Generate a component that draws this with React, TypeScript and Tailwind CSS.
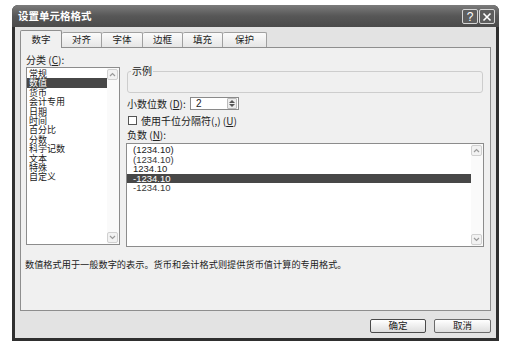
import React from 'react'

const categories = ['常规', '数值', '货币', '会计专用', '日期', '时间', '百分比', '分数', '科学记数', '文本', '特殊', '自定义']
const negatives = ['(1234.10)', '(1234.10)', '1234.10', '-1234.10', '-1234.10']
const tabs = [
    { label: '数字', w: 'w-[42px]' },
    { label: '对齐', w: 'w-[40px]' },
    { label: '字体', w: 'w-[41px]' },
    { label: '边框', w: 'w-[40px]' },
    { label: '填充', w: 'w-[40px]' },
    { label: '保护', w: 'w-[44px]' },
]

const Chevron = ({ up }: { up?: boolean }) => (
    <svg width="7" height="5" viewBox="0 0 7 5">
        <path d={up ? 'M1 4 L3.5 1.5 L6 4' : 'M1 1 L3.5 3.5 L6 1'} fill="none" stroke="#9a9a9a" strokeWidth="1.2" />
    </svg>
)

const ScrollBar = () => (
    <div className="w-[12px] flex flex-col justify-between py-[1px] pr-[1px] bg-[#fafafa]">
        <div className="h-[11px] border border-[#d0d0d0] rounded-[2px] bg-[#f2f2f2] flex items-center justify-center">
            <Chevron up />
        </div>
        <div className="h-[11px] border border-[#d0d0d0] rounded-[2px] bg-[#f2f2f2] flex items-center justify-center">
            <Chevron />
        </div>
    </div>
)

export default function App() {
    return (
        <div className="w-[520px] h-[351px] bg-white pt-[5px] pl-[12px] font-['Noto_Sans_CJK_SC',sans-serif] text-[#222]">
            <div className="w-[487px] h-[336px] flex flex-col rounded-t-[6px] overflow-hidden bg-[#2f2f2f]">
                {/* title bar */}
                <div className="h-[22px] flex items-center justify-between pl-[6px] pr-[4px] bg-gradient-to-b from-[#7c7c7c] via-[#575757] to-[#4b4b4b]">
                    <span className="text-[10.5px] font-bold text-white leading-none">设置单元格格式</span>
                    <div className="flex gap-[1px] mt-[1px]">
                        <div className="w-[16px] h-[15px] border border-[#d6d6d6] rounded-[2px] bg-[#5e5e5e] flex items-center justify-center text-white text-[12px] leading-none font-['Liberation_Sans',sans-serif]">?</div>
                        <div className="w-[16px] h-[15px] border border-[#d6d6d6] rounded-[2px] bg-[#5e5e5e] flex items-center justify-center">
                            <svg width="10" height="10" viewBox="0 0 10 10">
                                <path d="M1.5 1.5 L8.5 8.5 M8.5 1.5 L1.5 8.5" stroke="white" strokeWidth="1.6" />
                            </svg>
                        </div>
                    </div>
                </div>

                {/* body */}
                <div className="flex-1 mx-[3px] mb-[3px] bg-[#e3e3e3] px-[5px] pt-[3px] flex flex-col">
                    <div className="flex items-end h-[18px] relative z-10 -mb-px">
                        {tabs.map((t, i) => (
                            <div
                                key={i}
                                className={i === 0
                                    ? `${t.w} h-[18px] border border-b-0 border-[#8f8f8f] rounded-t-[2px] bg-[#f0f0f0] flex items-center justify-center text-[9.5px] leading-none`
                                    : `${t.w} h-[15px] border border-l-0 border-b-0 border-[#a0a0a0] rounded-t-[2px] bg-gradient-to-b from-[#fbfbfb] to-[#e6e6e6] flex items-center justify-center text-[9.5px] leading-none mb-[1px]`}
                            >
                                {t.label}
                            </div>
                        ))}
                    </div>

                    {/* panel */}
                    <div className="h-[264px] border border-[#8e8e8e] bg-[#f0f0f0] px-[5px] pt-[5px]">
                        <div className="flex">
                            <div className="w-[94px] flex flex-col">
                                <div className="h-[14px] text-[10px] leading-[14px]">分类 (<span className="underline">C</span>):</div>
                                <div className="h-[178px] border border-[#8c8c8c] bg-white flex">
                                    <div className="flex-1 pt-[1px]">
                                        {categories.map((c, i) => (
                                            <div key={i} className={`h-[9.4px] text-[9px] leading-[9.4px] pl-[2px] whitespace-nowrap ${i === 1 ? 'bg-[#474747] text-white' : ''}`}>{c}</div>
                                        ))}
                                    </div>
                                    <ScrollBar />
                                </div>
                            </div>

                            <div className="w-[358px] ml-[6px] flex flex-col">
                                <fieldset className="mt-[11px] h-[29px] mx-[1px] border border-[#cdcdcd] rounded-[3px]">
                                    <legend className="ml-[3px] px-[1px] text-[10px] leading-[14px]">示例</legend>
                                </fieldset>

                                <div className="mt-[4px] h-[13px] flex items-center">
                                    <span className="ml-[1px] w-[63px] text-[10px] leading-none whitespace-nowrap">小数位数 (<span className="underline">D</span>):</span>
                                    <div className="w-[49px] h-[13px] border border-[#8a8a8a] bg-white flex items-center justify-between">
                                        <span className="ml-[5px] text-[10px] leading-none font-['Liberation_Sans',sans-serif]">2</span>
                                        <div className="w-[10px] h-[11px] mr-[1px] border border-[#bcbcbc] rounded-[1px] bg-[#ececec] flex flex-col items-center justify-center gap-[1px]">
                                            <svg width="6" height="3" viewBox="0 0 6 3"><path d="M0 3 L3 0 L6 3 Z" fill="#555" /></svg>
                                            <svg width="6" height="3" viewBox="0 0 6 3"><path d="M0 0 L3 3 L6 0 Z" fill="#555" /></svg>
                                        </div>
                                    </div>
                                </div>

                                <div className="mt-[5px] h-[11px] flex items-center">
                                    <div className="ml-[2px] w-[9px] h-[9px] border border-[#555] bg-white" />
                                    <span className="ml-[4px] text-[10px] leading-none whitespace-nowrap">使用千位分隔符(,) (<span className="underline">U</span>)</span>
                                </div>

                                <div className="mt-[2px] h-[13px] ml-[1px] text-[10px] leading-[13px]">负数 (<span className="underline">N</span>):</div>

                                <div className="mt-[2px] h-[104px] border border-[#8c8c8c] bg-white flex">
                                    <div className="flex-1 pt-[1px]">
                                        {negatives.map((n, i) => (
                                            <div key={i} className={`h-[9.5px] text-[9.5px] leading-[9.5px] pl-[6px] font-['Liberation_Sans',sans-serif] ${i === 3 ? 'bg-[#474747] text-white' : i === 1 || i === 4 ? 'text-[#3a3a3a]' : 'text-[#222]'}`}>{n}</div>
                                        ))}
                                    </div>
                                    <ScrollBar />
                                </div>
                            </div>
                        </div>

                        <div className="mt-[10px] -ml-px text-[9.2px] leading-[14px] whitespace-nowrap">数值格式用于一般数字的表示。货币和会计格式则提供货币值计算的专用格式。</div>
                    </div>

                    {/* buttons */}
                    <div className="mt-[8px] flex justify-end gap-[8px]">
                        <div className="w-[56px] h-[14px] border border-[#4a4a4a] rounded-[2px] bg-gradient-to-b from-white to-[#dedede] flex items-center justify-center text-[9.5px] leading-none">确定</div>
                        <div className="w-[57px] h-[14px] border border-[#6a6a6a] rounded-[2px] bg-gradient-to-b from-white to-[#dedede] flex items-center justify-center text-[9.5px] leading-none">取消</div>
                    </div>
                </div>
            </div>
        </div>
    )
}
